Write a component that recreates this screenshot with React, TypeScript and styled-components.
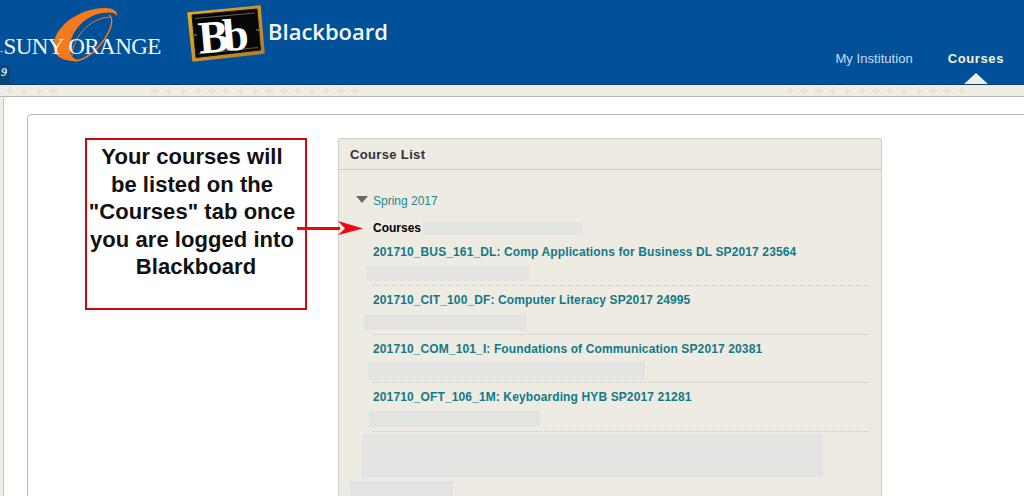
import React from 'react'
import styled, { createGlobalStyle } from 'styled-components'

const GlobalStyle = createGlobalStyle`
  html, body {
    margin: 0;
    padding: 0;
    background: #fff;
  }
  body {
    font-family: 'Liberation Sans', Arial, sans-serif;
  }
`

const Page = styled.div`
  width: 1024px;
  height: 496px;
  overflow: hidden;
  display: flex;
  flex-direction: column;
  background: #f0ede5;
`

const Header = styled.header`
  position: relative;
  flex: none;
  height: 84px;
  display: flex;
  align-items: flex-start;
  background: #01519a;
  border-bottom: 1px solid #0b3f72;
`

const SunyLogo = styled.div`
  position: relative;
  flex: none;
  width: 186px;
  height: 84px;
`

const Swirl = styled.svg`
  position: absolute;
  left: 50px;
  top: 5px;
`

const SunyText = styled.div`
  position: absolute;
  left: 0;
  top: 34px;
  font-family: 'Liberation Serif', 'Times New Roman', serif;
  font-size: 23px;
  line-height: 26px;
  letter-spacing: -0.55px;
  color: #f2f5fa;
  white-space: nowrap;
`

const SunyDash = styled.span`
  font-size: 9px;
  letter-spacing: 0.5px;
`

const ToolBadge = styled.div`
  position: absolute;
  left: 0;
  bottom: 0;
  width: 10px;
  height: 19px;
  background: #0c4677;
  border-top-right-radius: 3px;
  color: #dfe8f0;
  font-family: 'Liberation Serif', serif;
  font-style: italic;
  font-weight: 700;
  font-size: 12px;
  line-height: 15px;
  padding-left: 1px;
  box-sizing: border-box;
`

const BbMark = styled.svg`
  flex: none;
  margin-top: 4px;
`

const Wordmark = styled.div`
  flex: none;
  margin: 17px 0 0 2px;
  font-family: 'Open Sans', sans-serif;
  font-weight: 600;
  font-size: 22px;
  line-height: 28px;
  color: #f4f7fb;
`

const Tabs = styled.nav`
  margin-left: auto;
  align-self: flex-end;
  display: flex;
  height: 51px;
  padding-right: 20px;
  gap: 35px;
`

const Tab = styled.a<{ $active?: boolean }>`
  position: relative;
  display: block;
  font-size: 13px;
  line-height: 52px;
  font-weight: ${(p) => (p.$active ? 700 : 400)};
  letter-spacing: ${(p) => (p.$active ? '0.6px' : '0.05px')};
  color: ${(p) => (p.$active ? '#f6f2d0' : '#c9dcee')};

  ${(p) =>
    p.$active &&
    `&::after {
      content: '';
      position: absolute;
      left: 16px;
      bottom: 0;
      border-left: 12px solid transparent;
      border-right: 12px solid transparent;
      border-bottom: 11px solid #f0ede5;
    }`}
`

const Strip = styled.div`
  flex: none;
  height: 11px;
  display: flex;
  align-items: center;
  background: #f0ede5;
  border-bottom: 1px solid #b9b7b0;
`

const PlusRun = styled.div<{ $offset: number }>`
  display: flex;
  gap: 6.3px;
  margin-left: ${(p) => p.$offset}px;
`

const Plus = styled.i`
  display: block;
  width: 8px;
  height: 8px;
  background: linear-gradient(#e7e3d9, #e7e3d9) center / 8px 2px no-repeat,
    linear-gradient(#e7e3d9, #e7e3d9) center / 2px 8px no-repeat;
`

const Body = styled.div`
  flex: 1;
  min-height: 0;
  display: flex;
  padding-left: 3px;
  background: #f0ede5;
`

const Sheet = styled.main`
  flex: 1;
  padding: 17px 0 0 23px;
  background: #fff;
  border-left: 1px solid #c4c2bb;
  border-top-left-radius: 4px;
`

const ContentBox = styled.section`
  height: 100%;
  box-sizing: border-box;
  padding: 23px 0 0 57px;
  border-top: 1px solid #b8b8b8;
  border-left: 1px solid #b8b8b8;
  border-top-left-radius: 5px;
`

const Columns = styled.div`
  position: relative;
  display: flex;
  align-items: flex-start;
  gap: 31px;
`

const Callout = styled.div`
  flex: none;
  box-sizing: border-box;
  width: 222px;
  height: 172px;
  padding: 3px 8px 0 0;
  border: 2px solid #c9080f;
  text-align: center;
  font-size: 22px;
  font-weight: 700;
  line-height: 27.5px;
  letter-spacing: 0.05px;
  color: #111;
`

const CalloutLast = styled.span`
  display: inline-block;
  padding-left: 8px;
`

const Arrow = styled.svg`
  position: absolute;
  left: 212px;
  top: 80px;
`

const Panel = styled.section`
  flex: none;
  width: 544px;
  height: 400px;
  box-sizing: border-box;
  background: #eeebe3;
  border: 1px solid #d0cec7;
  border-bottom: none;
  border-radius: 3px 3px 0 0;
`

const PanelTitle = styled.h2`
  margin: 0;
  height: 31px;
  box-sizing: border-box;
  padding-left: 11px;
  border-bottom: 1px solid #cfcdc6;
  font-size: 13px;
  font-weight: 700;
  line-height: 32px;
  letter-spacing: 0.35px;
  color: #333;
`

const TermRow = styled.div`
  display: flex;
  align-items: center;
  gap: 5px;
  height: 16px;
  margin: 23px 0 0 17px;
  font-size: 12px;
  color: #24868f;
`

const TermCaret = styled.span`
  width: 0;
  height: 0;
  border-left: 6px solid transparent;
  border-right: 6px solid transparent;
  border-top: 7px solid #6a6a68;
  margin-top: -3px;
`

const CoursesRow = styled.div`
  display: flex;
  align-items: center;
  height: 16px;
  margin: 11px 0 0 34px;
  font-size: 12px;
  font-weight: 700;
  color: #000;
`

const Redaction = styled.div<{ $width: number; $height: number; $offset: number }>`
  flex: none;
  box-sizing: border-box;
  width: ${(p) => p.$width}px;
  height: ${(p) => p.$height}px;
  margin-left: ${(p) => p.$offset}px;
  background: #e3e3e1;
  border: 1px solid #ecebe6;
`

const CourseList = styled.ul`
  list-style: none;
  margin: 1px 0 1px;
  padding: 0;
`

const Course = styled.li<{ $height: number; $top: number }>`
  box-sizing: border-box;
  height: ${(p) => p.$height}px;
  width: 496px;
  margin-left: 34px;
  padding-top: ${(p) => p.$top}px;
  border-bottom: 1px dotted #c9c7be;
`

const CourseLink = styled.a`
  display: block;
  height: 16px;
  font-size: 12px;
  font-weight: 700;
  line-height: 16px;
  letter-spacing: 0.12px;
  color: #117a87;
  white-space: nowrap;
`

const courses = [
  { title: '201710_BUS_161_DL: Comp Applications for Business DL SP2017 23564', h: 49, top: 7, w: 165, rh: 17, x: -8, gap: 5 },
  { title: '201710_CIT_100_DF: Computer Literacy SP2017 24995', h: 49, top: 6, w: 164, rh: 17, x: -10, gap: 6 },
  { title: '201710_COM_101_I: Foundations of Communication SP2017 20381', h: 48, top: 6, w: 279, rh: 20, x: -6, gap: 4 },
  { title: '201710_OFT_106_1M: Keyboarding HYB SP2017 21281', h: 49, top: 6, w: 173, rh: 18, x: -5, gap: 5 },
]

const Spacer = styled.div<{ $h: number }>`
  height: ${(p) => p.$h}px;
`

const Plusses = ({ count, offset }: { count: number; offset: number }) => (
  <PlusRun $offset={offset}>
    {Array.from({ length: count }, (_, i) => (
      <Plus key={i} />
    ))}
  </PlusRun>
)

export default function App() {
  return (
    <Page>
      <GlobalStyle />
      <Header>
        <SunyLogo>
          <Swirl width="72" height="60" viewBox="50 5 72 60">
            <path
              d="M75 61C58 61 50 52 55 38C62 20 85 8 105 8C113 8 118 11 117 16C115 12 110 12 103 13C88 15 76 25 71 40C68 50 70 57 77 60Z"
              fill="#f47a1c"
            />
            <path
              d="M109 15C114 18 112 28 104 40C96 51 86 60 74 61"
              fill="none"
              stroke="#f47a1c"
              strokeWidth="1.4"
            />
            <path d="M72 56C72 40 88 18 110 17" fill="none" stroke="#f47a1c" strokeWidth="1" />
          </Swirl>
          <SunyText>
            <SunyDash>-</SunyDash>SUNY ORANGE
          </SunyText>
          <ToolBadge>9</ToolBadge>
        </SunyLogo>
        <BbMark width="80" height="60" viewBox="0 0 80 60">
          <defs>
            <linearGradient id="gold" x1="0" y1="0" x2="1" y2="1">
              <stop offset="0" stopColor="#e3ab2c" />
              <stop offset="0.55" stopColor="#c8922a" />
              <stop offset="1" stopColor="#a87c2e" />
            </linearGradient>
          </defs>
          <polygon points="2,9 74,2 78,49 7,57" fill="url(#gold)" stroke="url(#gold)" strokeWidth="1.5" strokeLinejoin="round" />
          <polygon points="6,11 71,5 74.5,46 10,53.5" fill="#070707" stroke="#1a1712" strokeWidth="1" strokeLinejoin="round" />
          <path d="M9 14.5L69 9M12 50L72 43.5" stroke="#77756d" strokeWidth="0.8" />
          <path d="M8 31h3M70 26h3" stroke="#bdbbb3" strokeWidth="0.8" />
          <text
            x="12"
            y="47"
            transform="rotate(-5 40 30)"
            fontFamily="'Liberation Serif', serif"
            fontWeight="700"
            fontSize="46"
            letterSpacing="-6"
            fill="#fff"
          >
            Bb
          </text>
        </BbMark>
        <Wordmark>Blackboard</Wordmark>
        <Tabs>
          <Tab>My Institution</Tab>
          <Tab $active>Courses</Tab>
        </Tabs>
      </Header>
      <Strip>
        <Plusses count={4} offset={6} />
        <Plusses count={15} offset={94} />
        <Plusses count={13} offset={427} />
      </Strip>
      <Body>
        <Sheet>
          <ContentBox>
            <Columns>
              <Callout>
                Your courses will
                <br />
                be listed on the
                <br />
                "Courses" tab once
                <br />
                you are logged into
                <br />
                <CalloutLast>Blackboard</CalloutLast>
              </Callout>
              <Arrow width="68" height="20" viewBox="0 0 68 20">
                <path d="M0 9h43v3H0z" fill="#f0060f" />
                <path d="M41 3L66 10.5L41 17L48 10.5Z" fill="#f0060f" />
              </Arrow>
              <Panel>
                <PanelTitle>Course List</PanelTitle>
                <TermRow>
                  <TermCaret />
                  Spring 2017
                </TermRow>
                <CoursesRow>
                  Courses
                  <Redaction $width={161} $height={15} $offset={1} />
                </CoursesRow>
                <CourseList>
                  {courses.map((c) => (
                    <Course key={c.title} $height={c.h} $top={c.top}>
                      <CourseLink>{c.title}</CourseLink>
                      <Spacer $h={c.gap} />
                      <Redaction $width={c.w} $height={c.rh} $offset={c.x} />
                    </Course>
                  ))}
                </CourseList>
                <Redaction $width={463} $height={45} $offset={22} />
                <Spacer $h={2} />
                <Redaction $width={105} $height={20} $offset={10} />
              </Panel>
            </Columns>
          </ContentBox>
        </Sheet>
      </Body>
    </Page>
  )
}
